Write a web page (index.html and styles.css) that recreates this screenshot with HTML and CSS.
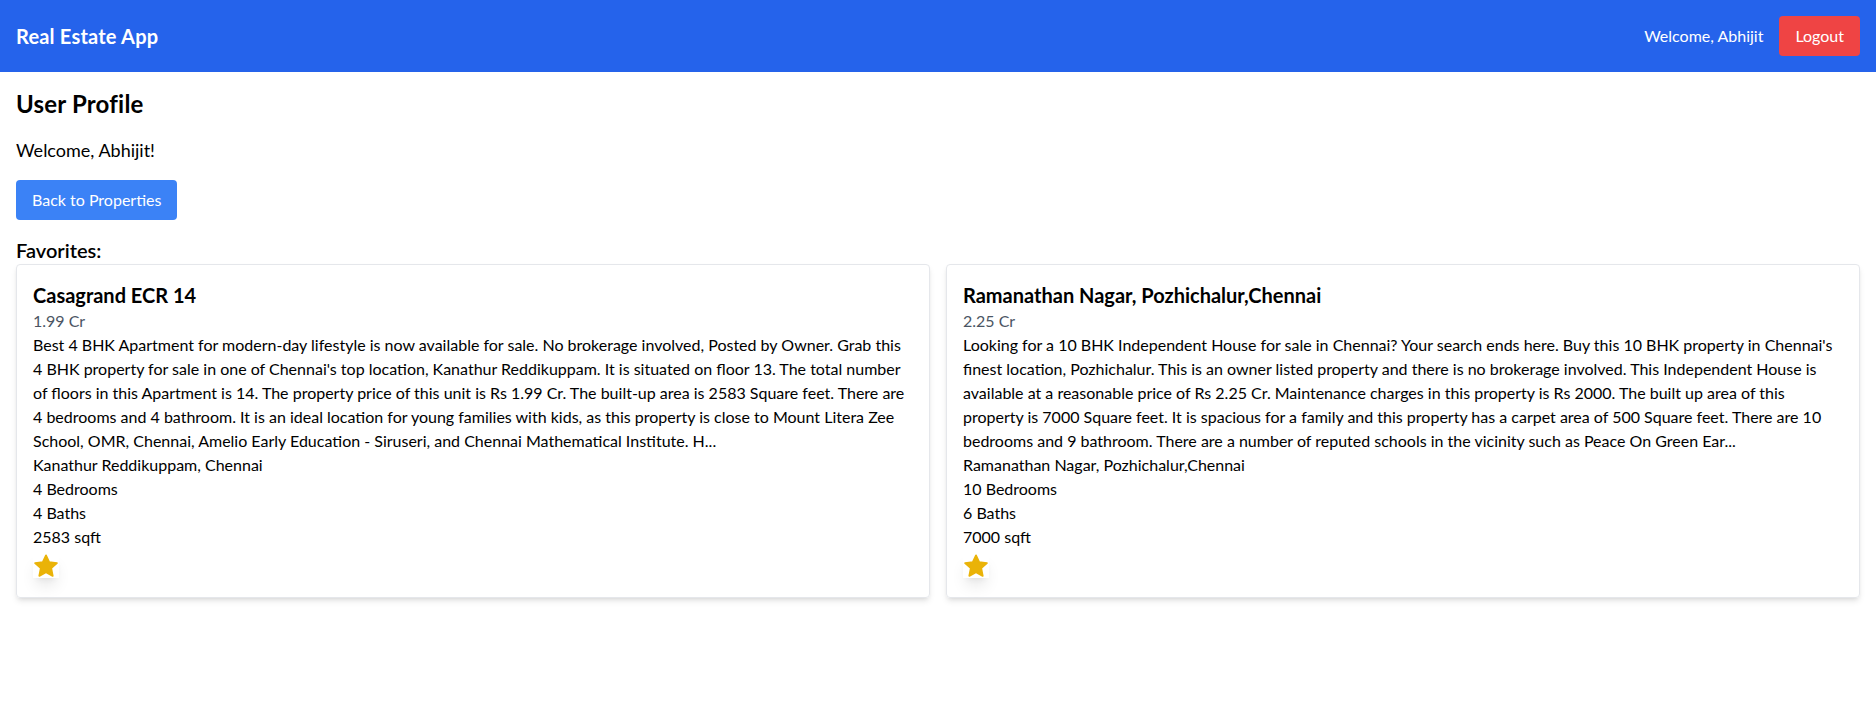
FILE: index.html
```html
<!DOCTYPE html>
<html lang="en">
<head>
<meta charset="utf-8">
<title>Real Estate App</title>
<link rel="stylesheet" href="styles.css">
</head>
<body>
<nav class="navbar">
  <div class="brand">Real Estate App</div>
  <div class="nav-right">
    <span class="nav-welcome">Welcome, Abhijit</span>
    <button class="btn btn-red">Logout</button>
  </div>
</nav>
<main class="main">
  <h1 class="page-title">User Profile</h1>
  <p class="welcome">Welcome, Abhijit!</p>
  <button class="btn btn-blue">Back to Properties</button>
  <h2 class="fav-title">Favorites:</h2>
  <div class="grid">
    <div class="card">
      <h3 class="card-title">Casagrand ECR 14</h3>
      <p class="price">1.99 Cr</p>
      <p class="desc">Best 4 BHK Apartment for modern-day lifestyle is now available for sale. No brokerage involved, Posted by Owner. Grab this 4 BHK property for sale in one of Chennai's top location, Kanathur Reddikuppam. It is situated on floor 13. The total number of floors in this Apartment is 14. The property price of this unit is Rs 1.99 Cr. The built-up area is 2583 Square feet. There are 4 bedrooms and 4 bathroom. It is an ideal location for young families with kids, as this property is close to Mount Litera Zee School, OMR, Chennai, Amelio Early Education - Siruseri, and Chennai Mathematical Institute. H...</p>
      <p class="line">Kanathur Reddikuppam, Chennai</p>
      <p class="line">4 Bedrooms</p>
      <p class="line">4 Baths</p>
      <p class="line">2583 sqft</p>
      <svg class="star" viewBox="0 0 26 24" width="26" height="24" aria-label="Favorite"><path fill="#eab308" stroke="#eab308" stroke-width="1.8" stroke-linejoin="round" d="M13 1.4 16.2 8.2 23.9 9.1 18.2 14.2 19.7 21.9 13 18.1 6.3 21.9 7.8 14.2 2.1 9.1 9.8 8.2Z"/></svg>
    </div>
    <div class="card">
      <h3 class="card-title">Ramanathan Nagar, Pozhichalur,Chennai</h3>
      <p class="price">2.25 Cr</p>
      <p class="desc">Looking for a 10 BHK Independent House for sale in Chennai? Your search ends here. Buy this 10 BHK property in Chennai's finest location, Pozhichalur. This is an owner listed property and there is no brokerage involved. This Independent House is available at a reasonable price of Rs 2.25 Cr. Maintenance charges in this property is Rs 2000. The built up area of this property is 7000 Square feet. It is spacious for a family and this property has a carpet area of 500 Square feet. There are 10 bedrooms and 9 bathroom. There are a number of reputed schools in the vicinity such as Peace On Green Ear...</p>
      <p class="line">Ramanathan Nagar, Pozhichalur,Chennai</p>
      <p class="line">10 Bedrooms</p>
      <p class="line">6 Baths</p>
      <p class="line">7000 sqft</p>
      <svg class="star" viewBox="0 0 26 24" width="26" height="24" aria-label="Favorite"><path fill="#eab308" stroke="#eab308" stroke-width="1.8" stroke-linejoin="round" d="M13 1.4 16.2 8.2 23.9 9.1 18.2 14.2 19.7 21.9 13 18.1 6.3 21.9 7.8 14.2 2.1 9.1 9.8 8.2Z"/></svg>
    </div>
  </div>
</main>
</body>
</html>
```

FILE: styles.css
```css
* { box-sizing: border-box; }
body {
  margin: 0;
  font-family: Lato, "Noto Sans", sans-serif;
  font-size: 16px;
  line-height: 24px;
  color: #000;
  background: #fff;
}
h1, h2, h3, p { margin: 0; }
.navbar {
  background: #2563eb;
  color: #fff;
  padding: 16px;
  display: flex;
  align-items: center;
  justify-content: space-between;
}
.brand { font-size: 20px; line-height: 28px; font-weight: 700; letter-spacing: 0.2px; }
.nav-right { display: flex; align-items: center; gap: 16px; }
.nav-welcome { font-size: 16px; }
.btn {
  font-family: inherit;
  font-size: 16px;
  line-height: 24px;
  color: #fff;
  border: none;
  border-radius: 4px;
  padding: 8px 16px;
  cursor: pointer;
}
.btn-red { background: #ef4444; }
.btn-blue { background: #3b82f6; margin-bottom: 16px; }
.main { padding: 16px; }
.page-title { font-size: 24px; line-height: 32px; font-weight: 700; margin-bottom: 16px; letter-spacing: 0.2px; }
.welcome { font-size: 18px; line-height: 28px; margin-bottom: 16px; }
.fav-title { font-size: 20px; line-height: 28px; font-weight: 600; }
.grid { display: grid; grid-template-columns: 1fr 1fr; gap: 16px; }
.card {
  border: 1px solid #e5e7eb;
  border-radius: 4px;
  padding: 16px;
  box-shadow: 0 4px 6px -1px rgba(0,0,0,0.1), 0 2px 4px -2px rgba(0,0,0,0.1);
  display: flex;
  flex-direction: column;
  align-items: flex-start;
}
.card-title { font-size: 20px; line-height: 28px; font-weight: 700; }
.price { color: #4b5563; }
.star {
  display: block;
  margin-top: 5px;
  margin-bottom: 3px;
  box-shadow: 0 10px 15px -3px rgba(0,0,0,0.1), 0 4px 6px -4px rgba(0,0,0,0.1);
}
```
